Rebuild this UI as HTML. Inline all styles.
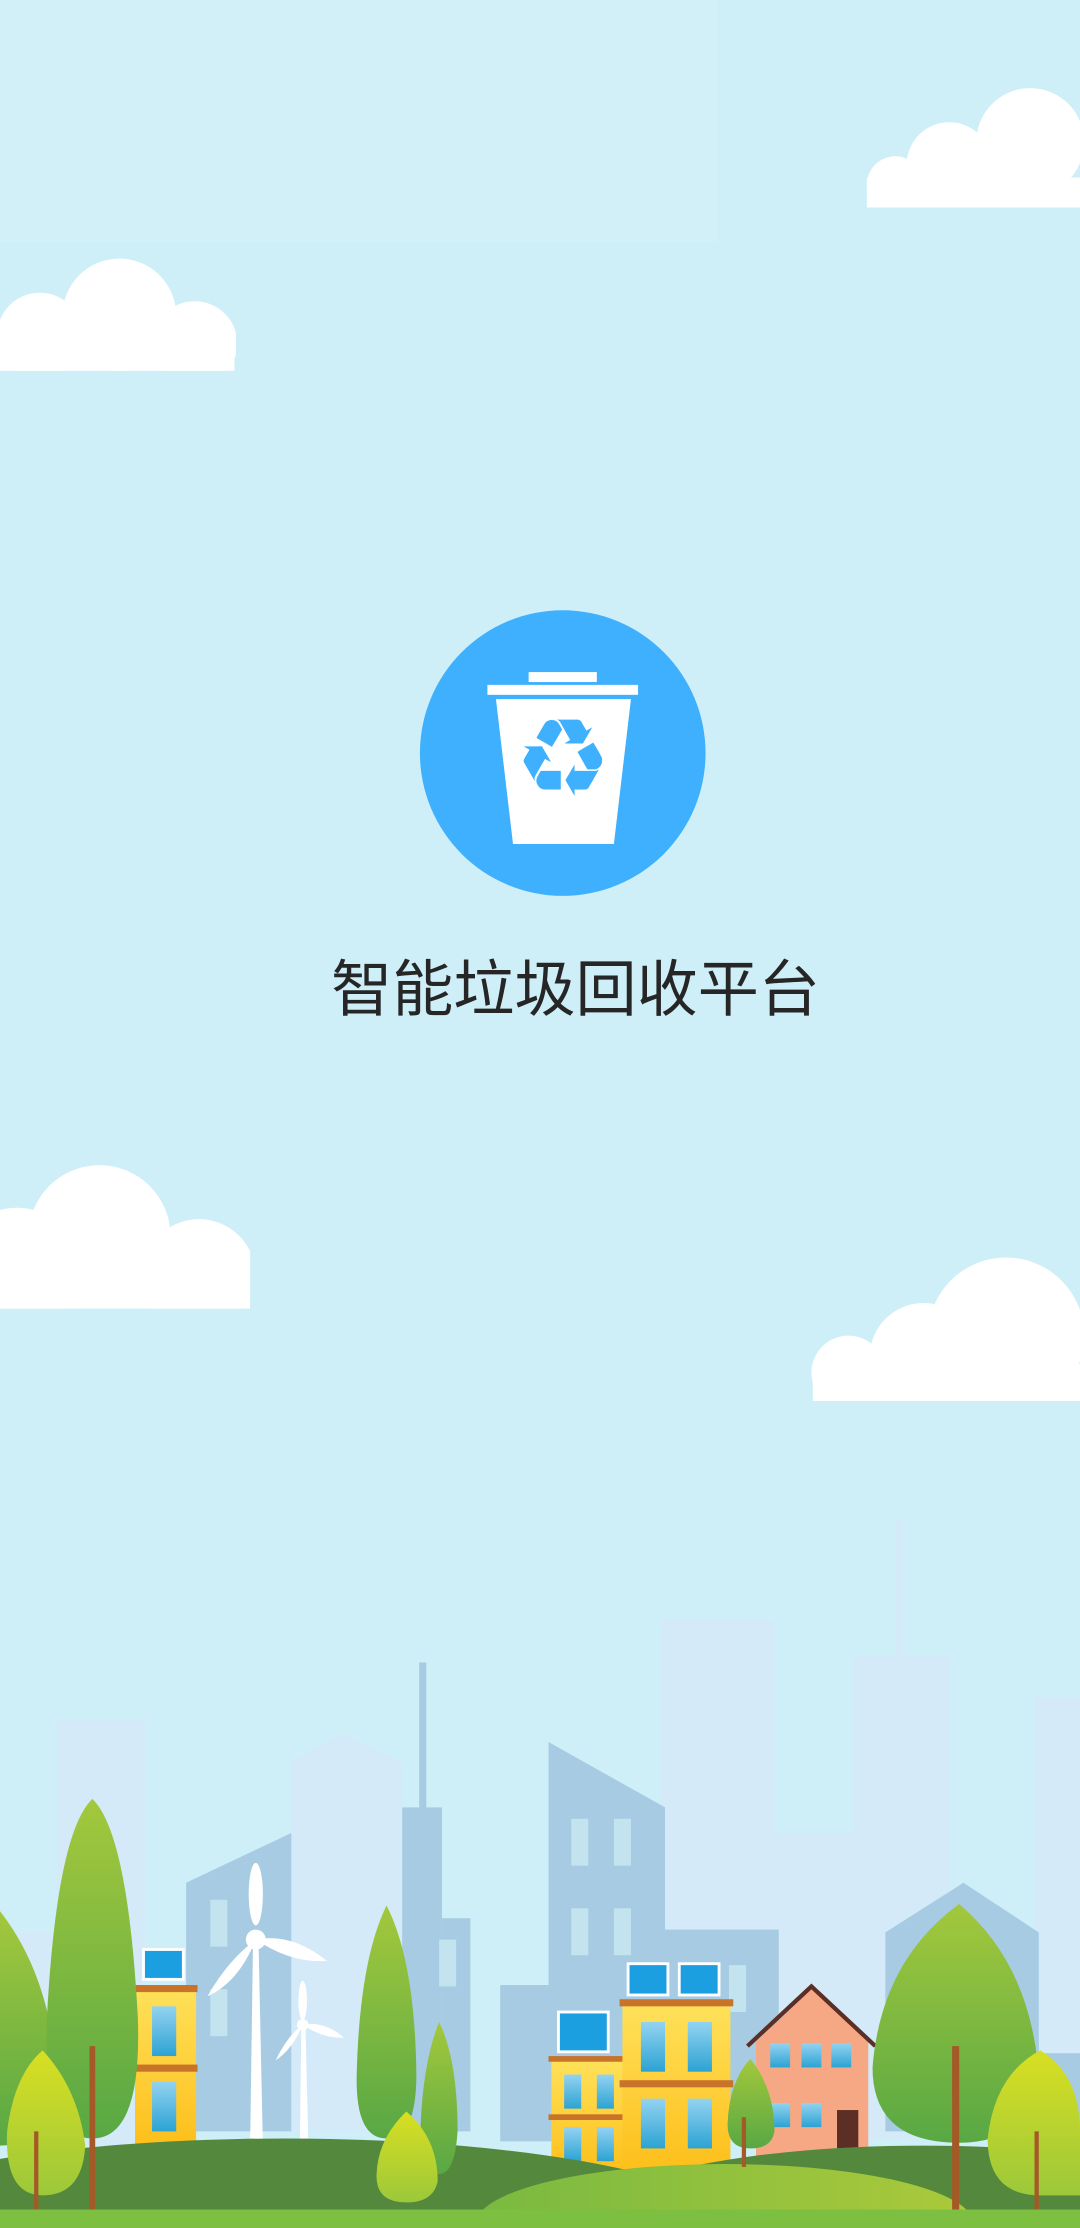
<!DOCTYPE html>
<html><head><meta charset="utf-8"><style>
html,body{margin:0;padding:0;background:#cfeff8;}
svg{display:block;}
</style></head><body>
<svg width="1080" height="2228" viewBox="0 0 760 1568" preserveAspectRatio="none" xmlns="http://www.w3.org/2000/svg">
<defs>
<linearGradient id="tg" x1="0" y1="0" x2="0" y2="1"><stop offset="0" stop-color="#a3c83c"/><stop offset="1" stop-color="#58a844"/></linearGradient>
<linearGradient id="yg" x1="0" y1="0" x2="0" y2="1"><stop offset="0" stop-color="#d8df22"/><stop offset="1" stop-color="#9cc83a"/></linearGradient>
<linearGradient id="bg" x1="0" y1="0" x2="0" y2="1"><stop offset="0" stop-color="#fee15a"/><stop offset="1" stop-color="#fdbd17"/></linearGradient>
<linearGradient id="wg" x1="0" y1="0" x2="0" y2="1"><stop offset="0" stop-color="#93d3f1"/><stop offset="1" stop-color="#2ca3d3"/></linearGradient>
<linearGradient id="hg" x1="0" y1="0" x2="1" y2="0"><stop offset="0" stop-color="#79b941"/><stop offset="1" stop-color="#abc93a"/></linearGradient>
<clipPath id="c1"><rect x="0" y="0" width="760" height="146"/></clipPath>
<clipPath id="c2"><rect x="0" y="0" width="166" height="261"/></clipPath>
<clipPath id="c3"><rect x="0" y="0" width="176" height="921"/></clipPath>
<clipPath id="c4"><rect x="0" y="0" width="760" height="986"/></clipPath>
</defs>
<rect width="760" height="1568" fill="#cfeff8"/>
<rect x="0" y="0" width="505" height="170" fill="#d1f0f8"/>
<!-- clouds -->
<g fill="#fff">
<g clip-path="url(#c1)"><circle cx="725" cy="100" r="38"/><circle cx="668" cy="116" r="30"/><circle cx="630" cy="130" r="20"/><rect x="610" y="125" width="150" height="26"/></g>
<g clip-path="url(#c2)"><circle cx="84" cy="222" r="40"/><circle cx="137" cy="242" r="30"/><circle cx="28" cy="236" r="30"/><rect x="0" y="235" width="165" height="26"/></g>
<g clip-path="url(#c3)"><circle cx="70" cy="870" r="50"/><circle cx="140" cy="898" r="40"/><circle cx="12" cy="895" r="45"/><rect x="0" y="890" width="176" height="31"/></g>
<g clip-path="url(#c4)"><circle cx="708" cy="940" r="55"/><circle cx="650" cy="955" r="38"/><circle cx="597" cy="966" r="26"/><rect x="572" y="960" width="188" height="26"/></g>
</g>
<!-- logo -->
<circle cx="396" cy="530" r="100.5" fill="#3fb0fd"/>
<g fill="#fff">
<rect x="372" y="473" width="48" height="7"/>
<rect x="343" y="482" width="106" height="7"/>
<polygon points="349,492 444,492 432,594 361,594"/>
</g>
<text x="396" y="560" text-anchor="middle" font-family="DejaVu Sans, sans-serif" font-size="76" fill="#3fb0fd">♻</text>
<text x="405" y="711" text-anchor="middle" font-family="Liberation Sans, Noto Sans CJK SC, sans-serif" font-size="43" fill="#262626">智能垃圾回收平台</text>
<!-- pale buildings -->
<g fill="#d4eaf8">
<rect x="40" y="1210" width="62" height="300"/>
<polygon points="205,1240 240,1220 283,1240 283,1500 205,1500"/>
<rect x="465" y="1140" width="80" height="360"/>
<rect x="545" y="1290" width="60" height="210"/>
<rect x="600" y="1165" width="68" height="340"/><rect x="630" y="1070" width="5" height="100"/>
<rect x="728" y="1195" width="32" height="300"/>
<rect x="0" y="1360" width="40" height="140"/>
</g>
<!-- mid blue buildings -->
<g fill="#a6cbe3">
<polygon points="131,1325 205,1290 205,1500 131,1500"/>
<rect x="295" y="1170" width="5" height="105"/>
<rect x="283" y="1272" width="28" height="230"/>
<rect x="311" y="1350" width="20" height="150"/>
<rect x="352" y="1397" width="36" height="110"/>
<polygon points="386,1226 468,1272 468,1358 548,1358 548,1500 386,1500"/>
<polygon points="623,1360 678,1325 731,1360 731,1500 623,1500"/>
<rect x="731" y="1445" width="29" height="60"/>
</g>
<g fill="#c3e3ef">
<rect x="148" y="1337" width="12" height="33"/><rect x="148" y="1400" width="12" height="33"/>
<rect x="309" y="1365" width="12" height="33"/>
<rect x="402" y="1280" width="12" height="33"/><rect x="432" y="1280" width="12" height="33"/>
<rect x="402" y="1343" width="12" height="33"/><rect x="432" y="1343" width="12" height="33"/>
<rect x="513" y="1383" width="12" height="33"/>
</g>
<!-- wind turbines -->
<g fill="#fff">
<polygon points="178,1370 182,1370 185,1510 176,1510"/>
<ellipse cx="180" cy="1333" rx="5" ry="22"/>
<path d="M180,1365 Q205,1360 230,1380 Q205,1382 180,1365Z"/>
<path d="M180,1365 Q160,1380 146,1405 Q168,1395 180,1365Z"/>
<circle cx="180" cy="1365" r="7"/>
<polygon points="212,1428 215,1428 217,1510 211,1510"/>
<ellipse cx="213" cy="1408" rx="3" ry="14"/>
<path d="M213,1425 Q228,1422 242,1434 Q228,1435 213,1425Z"/>
<path d="M213,1425 Q202,1433 194,1450 Q206,1442 213,1425Z"/>
<circle cx="213" cy="1425" r="4"/>
</g>
<!-- yellow building left -->
<rect x="95" y="1398" width="43" height="120" fill="url(#bg)"/>
<rect x="93" y="1397" width="46" height="5" fill="#c8722a"/>
<rect x="93" y="1453" width="46" height="5" fill="#c8722a"/>
<rect x="107" y="1412" width="17" height="35" fill="url(#wg)"/>
<rect x="107" y="1465" width="17" height="35" fill="url(#wg)"/>
<rect x="100" y="1371" width="30" height="23" fill="#fff"/><rect x="102" y="1373" width="26" height="19" fill="#1b9fe0"/>
<!-- center yellow buildings -->
<rect x="388" y="1450" width="52" height="85" fill="url(#bg)"/>
<rect x="386" y="1447" width="54" height="4" fill="#c8722a"/>
<rect x="386" y="1488" width="54" height="4" fill="#c8722a"/>
<rect x="397" y="1460" width="12" height="24" fill="url(#wg)"/><rect x="420" y="1460" width="12" height="24" fill="url(#wg)"/>
<rect x="397" y="1497" width="12" height="24" fill="url(#wg)"/><rect x="420" y="1497" width="12" height="24" fill="url(#wg)"/>
<rect x="438" y="1410" width="76" height="125" fill="url(#bg)"/>
<rect x="436" y="1407" width="80" height="5" fill="#c8722a"/>
<rect x="436" y="1464" width="80" height="5" fill="#c8722a"/>
<rect x="451" y="1423" width="17" height="35" fill="url(#wg)"/><rect x="484" y="1423" width="17" height="35" fill="url(#wg)"/>
<rect x="451" y="1477" width="17" height="35" fill="url(#wg)"/><rect x="484" y="1477" width="17" height="35" fill="url(#wg)"/>
<rect x="392" y="1415" width="37" height="30" fill="#fff"/><rect x="394" y="1417" width="33" height="26" fill="#1b9fe0"/>
<rect x="441" y="1381" width="30" height="24" fill="#fff"/><rect x="443" y="1383" width="26" height="20" fill="#1b9fe0"/>
<rect x="477" y="1381" width="30" height="24" fill="#fff"/><rect x="479" y="1383" width="26" height="20" fill="#1b9fe0"/>
<!-- pink house -->
<polygon points="532,1437 571,1400 611,1437 611,1525 532,1525" fill="#f5a883"/>
<polyline points="526,1440 571,1398 616,1440" fill="none" stroke="#5b2f25" stroke-width="3"/>
<g fill="url(#wg)"><rect x="542" y="1438" width="14" height="17"/><rect x="564" y="1438" width="14" height="17"/><rect x="585" y="1438" width="14" height="17"/>
<rect x="542" y="1480" width="14" height="17"/><rect x="564" y="1480" width="14" height="17"/></g>
<rect x="589" y="1485" width="15" height="35" fill="#5b2f25"/>
<!-- hills -->
<ellipse cx="200" cy="1575" rx="330" ry="70" fill="#54893d"/>
<ellipse cx="650" cy="1570" rx="250" ry="60" fill="#54893d"/>
<ellipse cx="510" cy="1565" rx="175" ry="42" fill="url(#hg)"/>
<!-- trees -->
<g>
<path d="M0,1345 Q35,1390 40,1460 Q40,1510 0,1510Z" fill="url(#tg)"/>
<path d="M65,1266 Q90,1290 97,1420 Q100,1505 65,1505 Q30,1505 33,1420 Q40,1290 65,1266Z" fill="url(#tg)"/>
<rect x="63" y="1440" width="4" height="115" fill="#a45a27"/>
<path d="M30,1443 Q55,1470 60,1510 Q58,1545 30,1545 Q3,1545 5,1500 Q10,1460 30,1443Z" fill="url(#yg)"/>
<rect x="24" y="1500" width="3" height="55" fill="#a45a27"/>
<path d="M272,1341 Q292,1380 293,1460 Q293,1505 272,1505 Q250,1505 251,1460 Q253,1380 272,1341Z" fill="url(#tg)"/>
<path d="M309,1423 Q322,1450 322,1500 Q320,1530 309,1530 Q296,1530 296,1495 Q298,1450 309,1423Z" fill="url(#tg)"/>
<path d="M286,1486 Q308,1505 308,1535 Q305,1550 286,1550 Q264,1550 265,1530 Q266,1505 286,1486Z" fill="url(#yg)"/>
<path d="M528,1449 Q545,1470 545,1500 Q543,1512 528,1512 Q512,1512 512,1495 Q513,1465 528,1449Z" fill="url(#tg)"/>
<rect x="522" y="1490" width="3" height="35" fill="#a45a27"/>
<path d="M675,1340 Q722,1380 730,1450 Q730,1508 675,1508 Q614,1508 614,1455 Q620,1380 675,1340Z" fill="url(#tg)"/>
<rect x="670" y="1440" width="5" height="115" fill="#a45a27"/>
<path d="M732,1443 Q760,1460 760,1500 L760,1545 L732,1545 Q695,1545 695,1505 Q700,1460 732,1443Z" fill="url(#yg)"/>
<rect x="728" y="1500" width="3" height="55" fill="#a45a27"/>
</g>
<rect x="0" y="1555" width="760" height="13" fill="#7cbf41"/>
</svg>
</body></html>
